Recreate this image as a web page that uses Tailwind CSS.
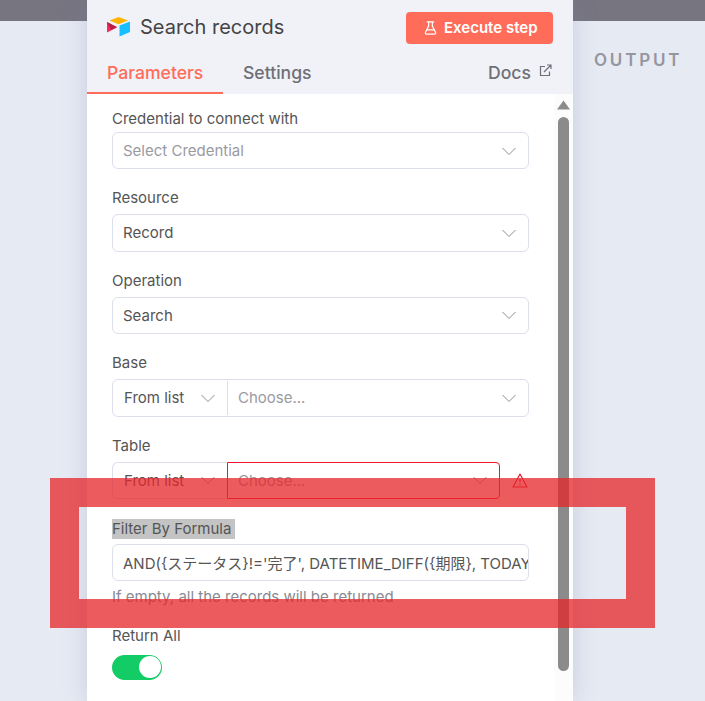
<!DOCTYPE html>
<html>
<head>
<meta charset="utf-8">
<script src="https://cdn.jsdelivr.net/npm/@tailwindcss/browser@4"></script>
</head>
<body class="m-0">
<div class="relative w-[705px] h-[701px] overflow-hidden bg-[#e6eaf3] font-['Inter','Noto_Sans_CJK_JP',sans-serif] text-[15px] text-[#555]">
  <div class="absolute inset-x-0 top-0 h-[21px] bg-[#777580]"></div>
  <div class="relative flex h-full">
    <div class="relative ml-[87px] w-[486px] h-full bg-white shadow-[0_0_22px_rgba(120,130,170,0.28)] flex flex-col">
      <div class="h-[94px] shrink-0 bg-[#f0f2f8] flex flex-col">
        <div class="flex items-start justify-between pl-[20px] pr-[20px] pt-[12px] h-[44px]">
          <div class="flex items-center gap-[10px] h-[30px]">
            <svg width="23" height="20" viewBox="0 0 23 20"><path d="M11.600 0 L2.500 3.400 L11.600 7.200 L21 3.400 Z" fill="#fcb400"/><path d="M12.500 8.600 V19.500 L23 15 V4.400 Z" fill="#18bfff"/><path d="M0 5 V15.400 L10 10.600 Z" fill="#f82b60"/><path d="M0 5 L10 10 L4 13 Z" fill="#ba1e45"/></svg>
            <span class="text-[20px] leading-[26px] text-[#444]">Search records</span>
          </div>
          <button class="h-[32px] w-[147px] rounded-[4px] bg-[#ff6d5a] text-white font-semibold text-[15px] flex items-center justify-start pl-[18px] gap-[7px]">
            <svg width="13" height="14" viewBox="0 0 14 15" fill="none" stroke="white" stroke-width="1.300" stroke-linejoin="round" stroke-linecap="round"><path d="M3.500 1h7M5 1v4.500L1.600 12c-.5 1 .1 2 1.200 2h8.400c1.100 0 1.700-1 1.200-2L9 5.500V1M3.500 9.500h7"/></svg>
            <span>Execute step</span>
          </button>
        </div>
        <div class="flex items-stretch flex-1 text-[17.600px] leading-[24px] font-medium text-[#6f6f76]">
          <div class="w-[136px] pl-[20px] pt-[17px] text-[#ff6d5a] border-b-2 border-[#ff6d5a]">Parameters</div>
          <div class="pl-[20px] pt-[17px]">Settings</div>
          <div class="ml-auto pr-[21px] pt-[17px] flex items-start gap-[8px]">
            <span>Docs</span>
            <svg class="mt-[3px]" width="13" height="13" viewBox="0 0 13 13" fill="none" stroke="#6f6f76" stroke-width="1.200"><path d="M6 2.500H1.500v9h9V7.500"/><path d="M5 8 12 1M8 1h4v4"/></svg>
          </div>
        </div>
      </div>
      <div class="pl-[25px] w-[442px] pt-[12px] flex flex-col gap-[19px]">
        <div>
          <div class="leading-[26px] h-[26px]">Credential to connect with</div>
          <div class="h-[37.400px] pt-[1px] rounded-[6px] border border-[#dbdfe9] flex items-center justify-between pl-[10px] pr-[11px] text-[#9a9aa2]"><span>Select Credential</span><svg width="16" height="9" viewBox="0 0 16 9" fill="none" stroke="#8f8f96"><path d="M1.500 1 8 7.500 14.500 1"/></svg></div>
        </div>
        <div>
          <div class="leading-[20px] h-[26px]">Resource</div>
          <div class="h-[37.400px] pt-[1px] rounded-[6px] border border-[#dbdfe9] flex items-center justify-between pl-[10px] pr-[11px]"><span>Record</span><svg width="16" height="9" viewBox="0 0 16 9" fill="none" stroke="#8f8f96"><path d="M1.500 1 8 7.500 14.500 1"/></svg></div>
        </div>
        <div>
          <div class="leading-[20px] h-[26px]">Operation</div>
          <div class="h-[37.400px] pt-[1px] rounded-[6px] border border-[#dbdfe9] flex items-center justify-between pl-[10px] pr-[11px]"><span>Search</span><svg width="16" height="9" viewBox="0 0 16 9" fill="none" stroke="#8f8f96"><path d="M1.500 1 8 7.500 14.500 1"/></svg></div>
        </div>
        <div>
          <div class="leading-[20px] h-[26px]">Base</div>
          <div class="h-[37.400px] pt-[1px] rounded-[6px] border border-[#dbdfe9] flex items-center">
            <div class="w-[115px] h-full -mt-[1px] pt-[1px] flex items-center justify-between pl-[11px] pr-[11px] border-r border-[#dbdfe9]"><span>From list</span><svg width="16" height="9" viewBox="0 0 16 9" fill="none" stroke="#8f8f96"><path d="M1.500 1 8 7.500 14.500 1"/></svg></div>
            <div class="flex-1 flex items-center justify-between pl-[10px] pr-[11px] text-[#9a9aa2]"><span>Choose...</span><svg width="16" height="9" viewBox="0 0 16 9" fill="none" stroke="#8f8f96"><path d="M1.500 1 8 7.500 14.500 1"/></svg></div>
          </div>
        </div>
        <div>
          <div class="leading-[20px] h-[26px]">Table</div>
          <div class="flex items-center">
            <div class="w-[115px] h-[37.400px] pt-[1px] rounded-l-[6px] border border-r-0 border-[#dbdfe9] flex items-center justify-between pl-[11px] pr-[11px]"><span>From list</span><svg width="16" height="9" viewBox="0 0 16 9" fill="none" stroke="#8f8f96"><path d="M1.500 1 8 7.500 14.500 1"/></svg></div>
            <div class="w-[273px] h-[37.400px] pt-[1px] rounded-r-[4px] border border-[#f0142f] flex items-center justify-between pl-[10px] pr-[11px] text-[#9a9aa2]"><span>Choose...</span><svg width="16" height="9" viewBox="0 0 16 9" fill="none" stroke="#8f8f96"><path d="M1.500 1 8 7.500 14.500 1"/></svg></div>
            <svg class="ml-[12px]" width="16" height="15" viewBox="0 0 16 15" fill="none" stroke="#f0142f" stroke-width="1.200" stroke-linejoin="round"><path d="M8 1 15 14H1Z"/><path d="M8 5.500v4M8 11v1.200"/></svg>
          </div>
        </div>
        <div>
          <div class="h-[26px]"><span class="inline-block h-[20px] leading-[20px] bg-[#c4c4c4] pr-[4px]">Filter By Formula</span></div>
          <div class="h-[37.400px] pt-[3px] rounded-[6px] border border-[#dbdfe9] flex items-center pl-[10px] overflow-hidden whitespace-nowrap"><span>AND({ステータス}!='完了', DATETIME_DIFF({期限}, TODAY()</span></div>
          <div class="mt-[5.600px] leading-[20px] text-[#8a8a92]">If empty, all the records will be returned</div>
        </div>
        <div>
          <div class="leading-[20px] h-[29px]">Return All</div>
          <div class="w-[50px] h-[25px] rounded-full bg-[#14cc66] flex items-center justify-end pr-[1px]"><div class="w-[22px] h-[22px] rounded-full bg-white"></div></div>
        </div>
      </div>
      <div class="absolute left-[467px] right-0 top-[94px] bottom-0 bg-[#fcfcfc]">
        <svg class="absolute left-[3px] top-[6px]" width="13" height="10" viewBox="0 0 13 10"><path d="M6.500 0.500 13 9.500H0Z" fill="#8b8b8b"/></svg>
        <div class="absolute left-[4px] top-[23px] w-[11px] h-[554px] rounded-full bg-[#8b8b8b]"></div>
      </div>
    </div>
    <div class="pl-[21px] pt-[50px] text-[17px] font-semibold tracking-[2.800px] text-[#96969e] leading-[20px]">OUTPUT</div>
  </div>
  <div class="absolute left-[50px] top-[478px] w-[605px] h-[150px] border-[29px] border-[#e6262a]/75"></div>
</div>
</body>
</html>
